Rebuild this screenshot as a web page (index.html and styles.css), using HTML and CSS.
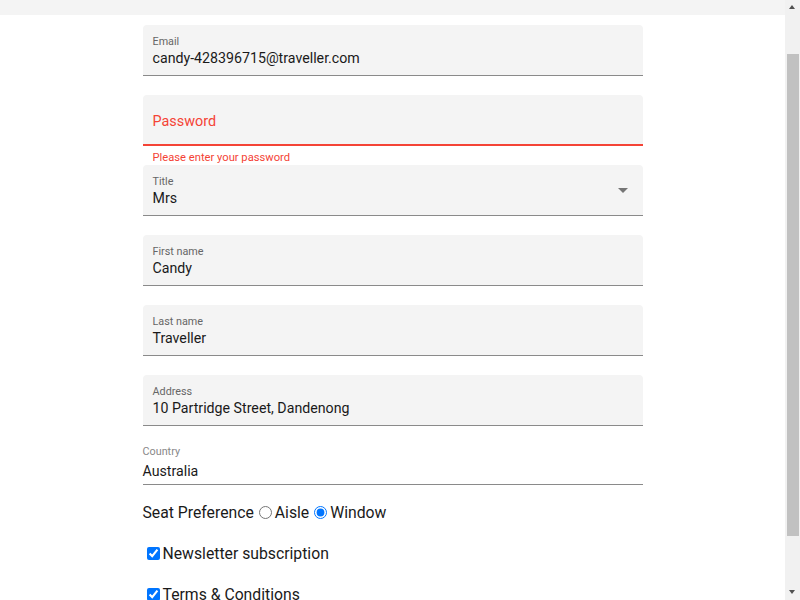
FILE: index.html
```html
<!DOCTYPE html>
<html lang="en">
<head>
<meta charset="utf-8">
<title>Traveller registration</title>
<link rel="stylesheet" href="styles.css">
</head>
<body>
<header class="topbar"></header>
<main class="form">
  <div class="field">
    <span class="field-label">Email</span>
    <span class="field-value">candy-428396715@traveller.com</span>
  </div>
  <div class="field field-error">
    <span class="field-placeholder">Password</span>
  </div>
  <div class="helper-error">Please enter your password</div>
  <div class="field field-select">
    <span class="field-label">Title</span>
    <span class="field-value">Mrs</span>
    <span class="select-arrow"></span>
  </div>
  <div class="field">
    <span class="field-label">First name</span>
    <span class="field-value">Candy</span>
  </div>
  <div class="field">
    <span class="field-label">Last name</span>
    <span class="field-value">Traveller</span>
  </div>
  <div class="field">
    <span class="field-label">Address</span>
    <span class="field-value">10 Partridge Street, Dandenong</span>
  </div>
  <div class="plain-field">
    <span class="plain-label">Country</span>
    <span class="field-value">Australia</span>
  </div>
  <div class="choice-row">Seat Preference<input type="radio" name="seat">Aisle<input type="radio" name="seat" checked>Window</div>
  <div class="choice-row"><input type="checkbox" checked>Newsletter subscription</div>
  <div class="choice-row"><input type="checkbox" checked>Terms &amp; Conditions</div>
</main>
<aside class="scrollbar" aria-hidden="true">
  <span class="scroll-up"></span>
  <span class="scroll-thumb"></span>
  <span class="scroll-down"></span>
</aside>
<script src="script.js"></script>
</body>
</html>
```
FILE: styles.css
```css
html, body {
  margin: 0;
  padding: 0;
}
body {
  font-family: Roboto, "Liberation Sans", sans-serif;
  color: #1f1f1f;
  background: #ffffff;
  margin-right: 15px;
}
.topbar {
  height: 61px;
  background: #f4f4f4;
}
.form {
  width: 500px;
  margin: 10px auto 0;
  padding-bottom: 44px;
  display: flex;
  flex-direction: column;
}
.field {
  position: relative;
  box-sizing: border-box;
  height: 51px;
  background: #f4f4f4;
  border-radius: 4px 4px 0 0;
  border-bottom: 1px solid #8a8a8a;
  padding: 11px 10px 0;
  margin-bottom: 19px;
  display: flex;
  flex-direction: column;
}
.field-label {
  font-size: 10.8px;
  line-height: 12px;
  color: #666666;
  margin-bottom: 1px;
}
.field-value {
  font-size: 14.2px;
  line-height: 18px;
  color: #1a1a1a;
}
.field-error {
  border-bottom: 2px solid #f44336;
  justify-content: center;
  padding: 4px 10px 0;
  margin-bottom: 0;
}
.field-placeholder {
  font-size: 14.4px;
  line-height: 18px;
  color: #f44336;
}
.helper-error {
  box-sizing: border-box;
  font-size: 11.2px;
  line-height: 14px;
  height: 19px;
  padding: 5px 0 0 10px;
  color: #f44336;
}
.select-arrow {
  position: absolute;
  right: 15px;
  top: 23px;
  width: 0;
  height: 0;
  border-left: 5px solid transparent;
  border-right: 5px solid transparent;
  border-top: 5px solid #757575;
}
.plain-field {
  display: flex;
  flex-direction: column;
  border-bottom: 1px solid #8a8a8a;
  padding-bottom: 4px;
  margin-top: 1px;
}
.plain-label {
  font-size: 10.8px;
  line-height: 12px;
  color: #888888;
  margin-bottom: 4px;
}
.choice-row {
  font-size: 15.75px;
  line-height: 19px;
  color: #1a1a1a;
  margin-top: 18px;
}
.choice-row input {
  vertical-align: -1px;
}
.choice-row + .choice-row {
  margin-top: 22px;
}
.scrollbar {
  position: fixed;
  top: 0;
  right: 0;
  width: 15px;
  height: 100vh;
  background: #f1f1f1;
}
.scroll-thumb {
  position: absolute;
  left: 2px;
  right: 1px;
  top: 54px;
  height: 482px;
  background: #c1c1c1;
}
.scroll-up,
.scroll-down {
  position: absolute;
  left: 4px;
  width: 0;
  height: 0;
  border-left: 3.5px solid transparent;
  border-right: 3.5px solid transparent;
}
.scroll-up {
  top: 5px;
  border-bottom: 4px solid #505050;
}
.scroll-down {
  bottom: 6px;
  border-top: 4px solid #505050;
}
```
FILE: script.js
```js
window.scrollTo(0, 46);
```
